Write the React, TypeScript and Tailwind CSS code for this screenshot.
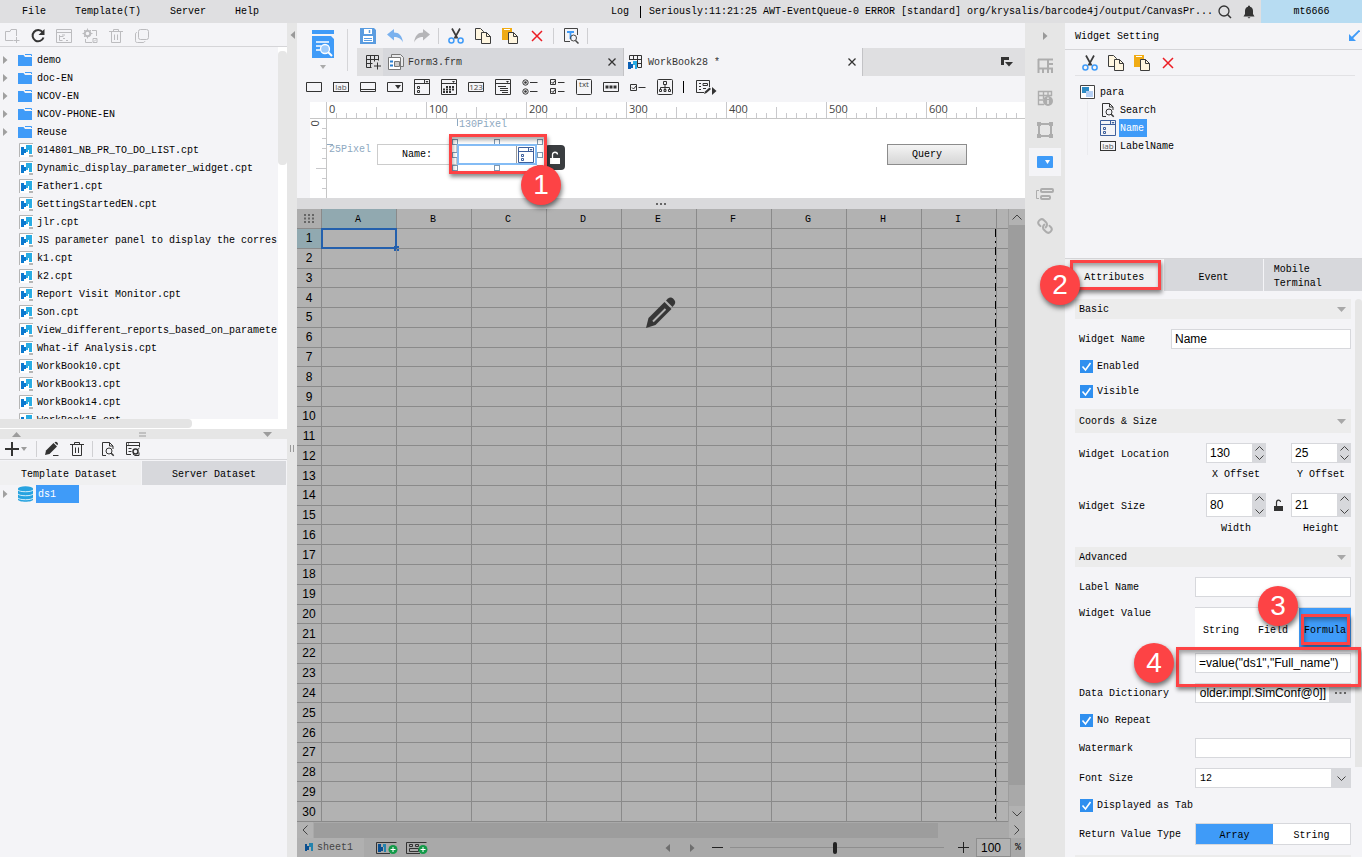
import { useState } from 'react';
import type { ReactNode } from 'react';
import { Link } from 'lucide-react';

interface SvgProps {
  w?: number;
  h?: number;
  className?: string;
  children: ReactNode;
}

function Svg({ w = 16, h = 16, className = '', children }: SvgProps) {
  return (
    <svg
      width={w}
      height={h}
      viewBox={`0 0 ${w} ${h}`}
      fill="none"
      stroke="currentColor"
      className={`shrink-0 ${className}`}
      aria-hidden="true"
    >
      {children}
    </svg>
  );
}

/* ---------- shared icons ---------- */

const CutIcon = () => (
  <Svg className="text-[#3c3c3c]">
    <path d="M4 .5l5.5 10M12 .5l-5.5 10" strokeWidth="1.7" />
    <circle cx="3.4" cy="12.5" r="2.5" stroke="#3f9bf8" strokeWidth="1.5" />
    <circle cx="12.6" cy="12.5" r="2.5" stroke="#3f9bf8" strokeWidth="1.5" />
  </Svg>
);

const CopyIcon = () => (
  <Svg className="text-[#3c3c3c]">
    <path d="M.5.5h5l3 3v8h-8z" fill="#fff6e0" />
    <path d="M6.5 4.5h5l4 4v7h-9z" fill="#fff6e0" />
    <path d="M11.5 4.5v4h4" />
  </Svg>
);

const PasteIcon = () => (
  <Svg className="text-[#3c3c3c]">
    <path d="M0 0h10v12H0z" fill="#f0ab14" stroke="none" />
    <path d="M2 1.5h6" stroke="#fff" />
    <path d="M6.5 4.5h5l4 4v7h-9z" fill="#fff6e0" />
    <path d="M11.5 4.5v4h4" />
  </Svg>
);

const DeleteIcon = () => (
  <Svg className="text-[#ec1c24]">
    <path d="M3 3l10 10M13 3L3 13" strokeWidth="1.5" />
  </Svg>
);

const TrashIcon = () => (
  <Svg>
    <path d="M1 3.5h14M5.5 3V1.5h5V3M3.5 4v10.5h9V4M6.5 6.5v5.5M9.5 6.5v5.5" />
  </Svg>
);

const PageSearchIcon = () => (
  <Svg className="text-[#333]">
    <path d="M6 14.5H2.5v-13h7L13 5v3M9.5 1.5V5H13" />
    <circle cx="9" cy="10" r="3" />
    <path d="M11.2 12.2l2.5 2.5" strokeWidth="1.5" />
  </Svg>
);

const ComboIcon = ({ color = '#333' }: { color?: string }) => (
  <Svg>
    <g stroke={color}>
      <path d="M.5.5h15v15H.5zM.5 4.5h15M10.5.5v4" />
      <path d="M3.500 7.500h2v2h-2zM3.500 11.500h2v2h-2z" />
      <path d="M11.500 2h3L13 4z" fill={color} stroke="none" />
    </g>
  </Svg>
);

const LabIcon = () => (
  <Svg h={11}>
    <rect x=".5" y=".5" width="15" height="9" stroke="#333" />
    <text x="8" y="8" textAnchor="middle" fontSize="8" fill="#555" stroke="none" fontFamily="Open Sans, sans-serif">lab</text>
  </Svg>
);

const Caret = ({ className = '' }: { className?: string }) => (
  <Svg w={5} h={8} className={className}>
    <path d="M0 0l4.500 4L0 8z" fill="currentColor" stroke="none" />
  </Svg>
);

const Down = ({ className = '' }: { className?: string }) => (
  <Svg w={9} h={5} className={className}>
    <path d="M0 0h9L4.500 5z" fill="currentColor" stroke="none" />
  </Svg>
);

const CptIcon = () => (
  <Svg w={14} h={14}>
    <path d="M.5 14V.5H14" stroke="#b5b5b5" />
    <path d="M1 1h13v13H1z" fill="#fff" stroke="none" />
    <path d="M2 4h3v2h2v4H5v2H2z" fill="#0a79d0" stroke="none" />
    <path d="M7 2h6v9h-3V7H9v2H7z" fill="#29ace3" stroke="none" />
    <path d="M10 13h4" stroke="#b5b5b5" strokeWidth="2" />
  </Svg>
);

const FolderIcon = () => (
  <Svg w={14} h={12}>
    <path d="M0 1h5.500l1.500 2h7v9H0z" fill="#3f9bf8" stroke="none" />
    <path d="M7 .5h6.500V2" stroke="#3f9bf8" />
  </Svg>
);

const Sep = ({ className = 'h-4' }: { className?: string }) => (
  <div className="flex w-[7px] shrink-0 justify-center">
    <div className={`w-px bg-[#cfcfd2] ${className}`} />
  </div>
);

/* ---------- annotation marks ---------- */

function Badge({ n, className }: { n: number; className: string }) {
  return (
    <div
      className={`absolute z-20 flex h-10 w-10 items-center justify-center rounded-full bg-[#fd4345] font-['Liberation_Sans',sans-serif] text-[28px] text-white shadow-[1px_3px_5px_rgba(0,0,0,0.55)] ${className}`}
    >
      {n}
    </div>
  );
}

function Frame({ className }: { className: string }) {
  return (
    <div
      className={`pointer-events-none absolute z-10 border-[3px] border-[#fd4345] shadow-[1px_3px_4px_rgba(0,0,0,0.45),inset_1px_3px_4px_rgba(0,0,0,0.35)] ${className}`}
    />
  );
}

/* ---------- header ---------- */

function MenuBar() {
  return (
    <header className="flex h-[23px] shrink-0 items-center bg-[#dfdfe1]">
      <nav className="flex gap-[29px] pl-[22px]">
        {['File', 'Template(T)', 'Server', 'Help'].map((m) => (
          <button key={m} type="button">{m}</button>
        ))}
      </nav>
      <div className="ml-auto flex h-full items-center">
        <span>Log</span>
        <span className="mx-2 ml-[11px] h-3 w-px bg-black" />
        <span className="whitespace-nowrap">
          Seriously:11:21:25 AWT-EventQueue-0 ERROR [standard] org/krysalis/barcode4j/output/CanvasPr...
        </span>
        <button type="button" aria-label="Search" className="ml-1 text-[#333]">
          <Svg>
            <circle cx="7" cy="7" r="5" strokeWidth="1.3" />
            <path d="M10.500 10.500L14 14" strokeWidth="1.5" />
          </Svg>
        </button>
        <button type="button" aria-label="Notifications" className="mr-1 ml-2 text-[#333]">
          <Svg>
            <path d="M8 1.500c1 0 1 .8 1 1.200 2 .5 3 2 3 4.300v3l1.500 2.500h-11L4 10V7c0-2.300 1-3.800 3-4.300 0-.4 0-1.200 1-1.200zM6.500 13.200h3L8 14.500z" fill="currentColor" stroke="none" />
          </Svg>
        </button>
        <button type="button" className="h-full w-[101px] bg-[#b7dcf2]">mt6666</button>
      </div>
    </header>
  );
}

/* ---------- left panel ---------- */

const FOLDERS = ['demo', 'doc-EN', 'NCOV-EN', 'NCOV-PHONE-EN', 'Reuse'];

const FILES = [
  '014801_NB_PR_TO_DO_LIST.cpt',
  'Dynamic_display_parameter_widget.cpt',
  'Father1.cpt',
  'GettingStartedEN.cpt',
  'jlr.cpt',
  'JS parameter panel to display the corres',
  'k1.cpt',
  'k2.cpt',
  'Report Visit Monitor.cpt',
  'Son.cpt',
  'View_different_reports_based_on_paramete',
  'What-if Analysis.cpt',
  'WorkBook10.cpt',
  'WorkBook13.cpt',
  'WorkBook14.cpt',
  'WorkBook15.cpt',
];

function FilePanel() {
  return (
    <section className="flex h-[406px] shrink-0 flex-col">
      <div className="flex h-6 shrink-0 items-center gap-[10px] border-b border-[#d5d5d8] pt-[3px] pl-1 text-[#bcbcbf]">
        <Svg>
          <path d="M9 12.500H1.500v-9H6l1-2h5.500V8M12.500 9v6M9.500 12.500h6" />
        </Svg>
        <Svg className="text-[#333]">
          <path d="M12.600 4.200A5.600 5.600 0 1 0 13.500 9.500" strokeWidth="2" />
          <path d="M14.500 1v6h-6z" fill="currentColor" stroke="none" />
        </Svg>
        <Svg>
          <path d="M.5 1.500h15v13H.5zM.5 4.500h15M3.500 7v5.500h3M3.500 8.500h4M6 7h3M7 10.500h2M10 12.500h2" />
        </Svg>
        <Svg>
          <circle cx="5.500" cy="5.500" r="2.800" strokeWidth="2" />
          <path d="M5.500.5v2M5.500 8.500v2M.5 5.500h2M8.500 5.500h2M2 2l1.500 1.500M9 2L7.500 3.500M2 9l1.500-1.500M10 2.500h4.500V8M3.500 11v3.500H10M11 10.500h4v4h-4zM12 13.500l2-2" />
        </Svg>
        <TrashIcon />
        <Svg>
          <rect x="4.500" y="1.500" width="10" height="10" rx="2" />
          <path d="M3 4.500c-1 0-1.500.5-1.500 1.500v6.500c0 1.500.5 2 2 2H9c1 0 1.500-.5 2-1.500" />
        </Svg>
      </div>
      <div className="flex min-h-0 flex-1">
        <ul className="min-w-0 flex-1 overflow-hidden pt-1">
          {FOLDERS.map((name) => (
            <li key={name} className="flex h-[18px] items-center whitespace-nowrap">
              <Caret className="mr-[10px] ml-[3px] text-[#a0a0a0]" />
              <FolderIcon />
              <span className="ml-[5px]">{name}</span>
            </li>
          ))}
          {FILES.map((name) => (
            <li key={name} className="flex h-[18px] items-center pl-[19px] whitespace-nowrap">
              <CptIcon />
              <span className="ml-1">{name}</span>
            </li>
          ))}
        </ul>
        <div className="ml-px w-[9px] shrink-0 bg-white pt-1">
          <div className="h-[114px] rounded bg-[#e6e6e6]" />
        </div>
      </div>
      <div className="h-[10px] shrink-0 bg-white">
        <div className="h-[9px] w-[192px] rounded-r bg-[#e4e4e4]" />
      </div>
    </section>
  );
}

function DatasetPanel() {
  return (
    <section className="flex-1">
      <div className="flex h-[10px] items-center justify-between bg-[#e6e6e6] pr-[15px] pl-3 text-[#9c9c9c]">
        <Down className="rotate-180" />
        <Svg w={7} h={5}>
          <path d="M0 1h7M0 4h7" />
        </Svg>
        <Down />
      </div>
      <div className="flex h-[21px] items-center border-b border-[#d5d5d8] text-[#333]">
        <Svg className="ml-1">
          <path d="M1 8h14M8 1v14" strokeWidth="2" />
        </Svg>
        <Svg w={6} h={4} className="ml-px text-[#9c9c9c]">
          <path d="M0 0h6L3 4z" fill="currentColor" stroke="none" />
        </Svg>
        <div className="mr-[7px] ml-[9px] h-4 w-px bg-[#d0d0d3]" />
        <Svg>
          <path d="M1 14l1-4.500L9.500 2l3.500 3.500L5.500 13z" fill="currentColor" stroke="none" />
          <path d="M10.500 1.500c1-1 2-.8 2.800 0s1 1.800 0 2.800z" fill="currentColor" stroke="none" />
          <path d="M9 14.500h5.500" />
        </Svg>
        <div className="ml-[9px]"><TrashIcon /></div>
        <div className="mr-[7px] ml-[7px] h-4 w-px bg-[#d0d0d3]" />
        <PageSearchIcon />
        <Svg className="ml-[9px]">
          <path d="M6 13.500H1.500v-12h13V6M1.500 4.500h13M3 3h1M3.500 7.500h3M3.500 10.500h3" />
          <circle cx="10.500" cy="10.500" r="2.500" strokeWidth="1.5" />
          <path d="M12 9l2.500-2M8 13l2 1.500h4v-3" />
        </Svg>
      </div>
      <div className="flex h-[25px] pt-px">
        <button type="button" className="w-[141px] bg-[#f0f0f1] pt-[3px] pr-[3px]">Template Dataset</button>
        <button type="button" className="ml-px w-[144px] bg-[#d7d8dc] pt-[3px]">Server Dataset</button>
      </div>
      <div className="flex h-[18px] items-center">
        <Caret className="mr-[10px] ml-[3px] text-[#a0a0a0]" />
        <Svg w={15}>
          <path d="M0 2.500v11c0 3 15 3 15 0v-11z" fill="#27a3e0" stroke="none" />
          <ellipse cx="7.500" cy="2.700" rx="7.500" ry="2.500" fill="#27a3e0" stroke="none" />
          <path d="M0 4c1 2.300 14 2.300 15 0M0 8c1 2.300 14 2.300 15 0M0 12c1 2.300 14 2.300 15 0" stroke="#d6effb" />
        </Svg>
        <span className="ml-[3px] flex h-full w-[43px] items-center bg-[#3f9bf8] pl-[2px] text-white">ds1</span>
      </div>
    </section>
  );
}

/* ---------- centre ---------- */

const Cell = ({ children, label }: { children: ReactNode; label: string }) => (
  <button type="button" aria-label={label} className="flex w-[27px] shrink-0 justify-center">
    {children}
  </button>
);

function MainToolbar() {
  return (
    <div className="flex h-[53px] shrink-0">
      <div className="relative flex w-[51px] shrink-0 flex-col items-center pt-[7px]">
        <Svg w={22} h={28}>
          <path d="M0 0h22v4H0zM0 6h19l3 3v19H0z" fill="#3f9bf8" stroke="none" />
          <path d="M4 12h13M4 16h5M4 20h4" stroke="#fff" strokeWidth="1.5" />
          <circle cx="13" cy="19" r="4.500" fill="#9dcbfb" stroke="#fff" strokeWidth="1.3" />
          <path d="M16 22l4 4" stroke="#fff" strokeWidth="2" />
        </Svg>
        <Svg w={6} h={4} className="mt-[7px] text-[#aaa]">
          <path d="M0 0h6L3 4z" fill="currentColor" stroke="none" />
        </Svg>
        <div className="absolute top-[6px] right-0 h-[42px] w-px bg-[#d5d5d8]" />
      </div>
      <div className="flex min-w-0 flex-1 flex-col">
        <div className="flex h-[25px] items-center pl-[6px]">
          <Cell label="Save">
            <Svg>
              <path d="M0 0h14l2 2v14H0z" fill="#5a9ce0" stroke="none" />
              <path d="M4 1h8v5H4z" fill="#fff" stroke="none" />
              <path d="M9.500 2v3" strokeWidth="1.5" stroke="#5a9ce0" />
              <path d="M3 8h10v6H3z" fill="#fff" stroke="none" />
              <path d="M4 10.500h8M4 12.500h8" stroke="#5a9ce0" />
            </Svg>
          </Cell>
          <Cell label="Undo">
            <Svg className="text-[#7ab1ee]">
              <path d="M0 6.500L7 1v3.500c5 0 8 3 9 10-2-4-5-5.500-9-5.500v3.500z" fill="currentColor" stroke="none" />
            </Svg>
          </Cell>
          <Cell label="Redo">
            <Svg className="text-[#b5b5b8]">
              <path d="M16 6.500L9 1v3.500c-5 0-8 3-9 10 2-4 5-5.500 9-5.500v3.500z" fill="currentColor" stroke="none" />
            </Svg>
          </Cell>
          <Sep />
          <Cell label="Cut"><CutIcon /></Cell>
          <Cell label="Copy"><CopyIcon /></Cell>
          <Cell label="Paste"><PasteIcon /></Cell>
          <Cell label="Delete"><DeleteIcon /></Cell>
          <Sep />
          <Cell label="Find">
            <Svg className="text-[#444]">
              <path d="M7 13.500H1.500v-13h13V7" />
              <path d="M4 4h7M7.500 4v7" stroke="#3f9bf8" strokeWidth="1.8" />
              <circle cx="10.500" cy="10" r="3" />
              <path d="M12.500 12.500L15.500 15.500" strokeWidth="1.5" />
            </Svg>
          </Cell>
          <Sep />
        </div>
        <div className="ml-[9px] flex h-7 items-center bg-[#dfdfe1] text-[#333]">
          <button type="button" aria-label="New template" className="flex h-full w-[26px] items-center justify-end bg-[#dfdfe1] pr-[2px]">
            <Svg>
              <path d="M1.500 1.500h12v5M1.500 1.500v12h5M1.500 5.500h12M1.500 9.500h6M5.500 1.500v12M9.500 1.500v6M12.500 8.500v7M9 12h7" />
            </Svg>
          </button>
          <div className="flex h-full w-[241px] items-center border-r border-[#c3c3c6] bg-[#d7d8dc] pr-[6px] pl-[5px]">
            <Svg className="text-[#777]">
              <path d="M3.500.5h9l3 3v9h-12z" fill="#e9e9ea" />
              <path d="M.5 3.500h12v12H.5z" fill="#fff" />
              <path d="M2 7.500h3M2 11.500h3" stroke="#2a7fd0" strokeWidth="2" />
              <path d="M6.500 7.500h5v5h-5z" fill="#ccc" />
            </Svg>
            <span className="ml-1">Form3.frm</span>
            <button type="button" aria-label="Close Form3.frm" className="ml-auto">
              <Svg w={10} h={10}><path d="M1.500 1.500l7 7M8.500 1.500l-7 7" strokeWidth="1.3" /></Svg>
            </button>
          </div>
          <div className="flex h-full w-[239px] items-center border-r border-[#c3c3c6] bg-[#f4f4f7] pr-[5px] pl-1">
            <Svg>
              <path d="M1.500 6V1.500h12v12H10M1.500 5.500h12M9 9.500h4.500M5.500 1.500v4M9.500 1.500v12" />
              <path d="M0 8h3v2h2v4H3v1H0z" fill="#0a5fb4" stroke="none" />
              <path d="M5 7h4v8H7v-4H5z" fill="#29ace3" stroke="none" />
            </Svg>
            <span className="ml-1">WorkBook28 *</span>
            <button type="button" aria-label="Close WorkBook28" className="ml-auto">
              <Svg w={10} h={10}><path d="M1.500 1.500l7 7M8.500 1.500l-7 7" strokeWidth="1.3" /></Svg>
            </button>
          </div>
          <button type="button" aria-label="Tab list" className="mr-[11px] ml-auto">
            <Svg w={13} h={10}>
              <path d="M0 0h8v3H3v5H0z" fill="currentColor" stroke="none" />
              <path d="M4 5h8L8 9.500z" fill="currentColor" stroke="none" />
            </Svg>
          </button>
        </div>
      </div>
    </div>
  );
}

function WidgetBar() {
  return (
    <div className="flex h-[26px] shrink-0 items-center pb-1 pl-[3px] text-[#333]">
      <Cell label="Text"><Svg><path d="M.5 3.500h15v9H.5z" /></Svg></Cell>
      <Cell label="Label widget"><LabIcon /></Cell>
      <Cell label="Button"><Svg><path d="M.5 3.500h15v9H.5zM.5 10.500h15" /></Svg></Cell>
      <Cell label="Drop-down box">
        <Svg>
          <path d="M.5 3.500h15v9H.5z" />
          <path d="M8 6h6l-3 4z" fill="currentColor" stroke="none" />
        </Svg>
      </Cell>
      <Cell label="Drop-down check box"><ComboIcon /></Cell>
      <Cell label="Date">
        <Svg>
          <path d="M.5.5h15v15H.5zM.5 4.500h15" />
          <path d="M5 8h9M2 10.500h12M2 13h9" strokeWidth="2" strokeDasharray="2 1" />
          <path d="M11 2h3l-1.500 2z" fill="currentColor" stroke="none" />
        </Svg>
      </Cell>
      <Cell label="Number">
        <Svg>
          <path d="M.5 3.500h15v9H.5z" />
          <text x="8" y="11" textAnchor="middle" fontSize="8" fill="#444" stroke="none" fontFamily="Open Sans, sans-serif">123</text>
        </Svg>
      </Cell>
      <Cell label="Tree">
        <Svg>
          <path d="M.5.5h15v15H.5zM.5 4.500h15M3 7.500h8M5 9.500h8M5 11.500h8M7 13.500h6" />
          <path d="M11 2h3l-1.500 2z" fill="currentColor" stroke="none" />
        </Svg>
      </Cell>
      <Cell label="Radio group">
        <Svg>
          <circle cx="3.500" cy="3.500" r="2.700" /><circle cx="3.500" cy="12.500" r="2.700" />
          <circle cx="3.500" cy="3.500" r="1.300" fill="currentColor" stroke="none" />
          <circle cx="3.500" cy="12.500" r="1.300" fill="currentColor" stroke="none" />
          <path d="M8 3.500h7.500M8 12.500h7.500" />
        </Svg>
      </Cell>
      <Cell label="Check box group">
        <Svg>
          <path d="M1.500.5h5v5h-5zM1.500 9.500h5v5h-5zM2.500 3l1.500 1.500 2-3M2.500 12l1.500 1.500 2-3M9 3.500h6.500M9 12.500h6.500" />
        </Svg>
      </Cell>
      <Cell label="Text area">
        <Svg>
          <rect x=".5" y=".5" width="15" height="15" rx="1" />
          <text x="8" y="8" textAnchor="middle" fontSize="8" fill="#444" stroke="none" fontFamily="Open Sans, sans-serif">txt</text>
        </Svg>
      </Cell>
      <Cell label="Password">
        <Svg>
          <path d="M.5 3.500h15v9H.5z" />
          <path d="M2.500 8h11" strokeWidth="3" strokeDasharray="3 1" />
        </Svg>
      </Cell>
      <Cell label="Check box">
        <Svg><path d="M.5 5.500h6v6h-6zM2 8.500l1.500 1.500 3-3.500M8.500 8.500h7" /></Svg>
      </Cell>
      <Cell label="View tree">
        <Svg>
          <rect x=".5" y=".5" width="15" height="15" rx="1" />
          <path d="M6.500 2.500h3v3h-3zM8 5.500v6M3.500 10.500v-2h9v2M2.500 10.500h2v2h-2zM7 10.500h2v2H7zM11.500 10.500h2v2h-2z" />
        </Svg>
      </Cell>
      <div className="mx-[5px] h-3 w-px bg-black" />
      <Cell label="Edit widgets">
        <Svg>
          <path d="M9 13.500H1.500v-12h13V8M4 4.500h2M4 7.500h2M4 10.500h2M8 4.500h4.500v2H8zM8 9.500h3" />
          <path d="M9 15l1-2.500 4.500-4 1.500 1.500-4.500 4z" fill="currentColor" stroke="none" />
        </Svg>
      </Cell>
      <Caret className="mt-2 -ml-1" />
    </div>
  );
}

const MAJORS = [0, 100, 200, 300, 400, 500, 600];
const MINORS = [0, 1, 2, 3, 4, 5, 6, 7, 8, 9];
const V_TICKS = [1, 2, 3, 4, 5, 6, 7];

const HANDLES = [
  'left-[-5px] top-[-5px]',
  'left-[37px] top-[-5px]',
  'left-[80px] top-[-5px]',
  'left-[-5px] top-2',
  'left-[80px] top-2',
  'left-[-5px] top-[21px]',
  'left-[37px] top-[21px]',
  'left-[80px] top-[21px]',
];

function ParamPane() {
  return (
    <div className="shrink-0 pl-[13px]">
      <div className="flex h-[17px] border-b border-[#c6c6c6] bg-white">
        <div className="w-4 shrink-0" />
        <div className="flex min-w-0 flex-1 overflow-hidden font-['Open_Sans',sans-serif] text-[11px] leading-3 text-[#444]">
          {MAJORS.map((m) => (
            <div key={m} className="relative flex h-4 w-[100px] shrink-0 items-end">
              {MINORS.map((i) => (
                <div
                  key={i}
                  className={`w-[10px] border-l border-[#c9c9cc] ${i === 0 ? 'h-4' : i === 5 ? 'h-[11px]' : 'h-[5px]'}`}
                />
              ))}
              <span className="absolute top-px left-[3px]">{m}</span>
            </div>
          ))}
        </div>
      </div>
      <div className="flex h-[79px] bg-white">
        <div className="flex w-4 shrink-0 flex-col items-end">
          <span className="flex h-[9px] w-full items-center pl-[2px] font-['Open_Sans',sans-serif] text-[11px] text-[#444]">
            <span className="-rotate-90">0</span>
          </span>
          {V_TICKS.map((i) => (
            <div key={i} className={`h-[10px] border-t border-[#c9c9cc] ${i === 5 ? 'w-[10px]' : 'w-1'}`} />
          ))}
        </div>
        {/* free-form widget canvas */}
        <div className="relative min-w-0 flex-1 border-l border-[#c6c6c6]">
          <span className="absolute top-0 left-[130px] h-[7px] w-px bg-[#8ea9c1]" />
          <span className="absolute top-0 left-[132px] leading-3 text-[#8ea9c1]">130Pixel</span>
          <span className="absolute top-[25px] left-0 h-px w-[6px] bg-[#8ea9c1]" />
          <span className="absolute top-[25px] left-[2px] leading-3 text-[#8ea9c1]">25Pixel</span>
          <label
            htmlFor="canvas-name"
            className="absolute top-[25px] left-[50px] flex h-[21px] w-20 items-center justify-center border border-[#ccc]"
          >
            Name:
          </label>
          <div className="absolute top-[25px] left-[130px] h-[21px] w-20">
            {HANDLES.map((pos) => (
              <span key={pos} className={`absolute h-[6px] w-[6px] border border-[#7f99b2] bg-white ${pos}`} />
            ))}
            <div className="relative flex h-full w-full border-2 border-[#84bcf5] bg-white">
              <input id="canvas-name" type="text" className="w-[58px] min-w-0 border-r border-[#999] outline-none" />
              <span className="flex flex-1 items-center justify-center"><ComboIcon color="#3d5f9c" /></span>
            </div>
          </div>
          <button
            type="button"
            aria-label="Unlock"
            className="absolute top-[26px] left-[218px] flex h-[25px] w-5 items-center justify-center rounded-sm bg-[#3a3d40] text-white"
          >
            <Svg w={12} h={14}>
              <path d="M1 7h10v6H1z" fill="currentColor" stroke="none" />
              <path d="M3.500 7V3.500C3.500.5 8.500.5 8.500 3.500" strokeWidth="1.3" />
            </Svg>
          </button>
          <button
            type="button"
            className="absolute top-[25px] left-[560px] h-[21px] w-20 border border-[#8c8c8c] bg-linear-to-b from-[#f4f4f4] to-[#d6d6d6]"
          >
            Query
          </button>
          <Frame className="top-[15px] left-[122px] h-10 w-[98px]" />
          <Badge n={1} className="top-[46px] left-[194px]" />
        </div>
      </div>
    </div>
  );
}

const COLS = ['A', 'B', 'C', 'D', 'E', 'F', 'G', 'H', 'I'];
const ROWS = Array.from({ length: 30 }, (_, i) => i + 1);

function Sheet() {
  return (
    <div className="relative flex min-h-0 flex-1">
      <table className="h-full min-w-0 flex-1 table-fixed border-separate border-spacing-0 bg-[#b2b2b2]">
        <thead>
          <tr className="h-5">
            <th className="w-[25px] border-r border-b border-[#8a8a8a] bg-[#adadad] p-0">
              <Svg w={10} h={9} className="mx-auto text-[#666]">
                <path d="M0 1h10M0 4.500h10M0 8h10" strokeWidth="2" strokeDasharray="2 2" />
              </Svg>
            </th>
            {COLS.map((c) => (
              <th
                key={c}
                className={`w-[75px] border-r border-b border-[#8a8a8a] px-0 pt-[3px] pr-[2px] pb-0 leading-4 font-normal ${
                  c === 'A' ? 'bg-[#91a9b0]' : ''
                }`}
              >
                {c}
              </th>
            ))}
            <th className="border-b border-[#8a8a8a] p-0" />
          </tr>
        </thead>
        <tbody>
          {ROWS.map((r) => (
            <tr key={r}>
              <th
                className={`border-r border-b border-[#8a8a8a] p-0 font-['Liberation_Sans',sans-serif] text-xs leading-3 font-normal ${
                  r === 1 ? 'bg-[#91a9b0]' : ''
                }`}
              >
                {r}
              </th>
              {COLS.map((c) => (
                <td key={c} className="relative border-r border-b border-[#8a8a8a] p-0">
                  {r === 1 && c === 'A' && (
                    <>
                      <div className="absolute -inset-px border-2 border-[#2460ad]" />
                      <div className="absolute -right-[3px] -bottom-[3px] h-[5px] w-[5px] bg-[#2460ad]" />
                    </>
                  )}
                </td>
              ))}
              <td className="border-b border-[#8a8a8a] p-0" />
            </tr>
          ))}
        </tbody>
      </table>
      {/* page break line */}
      <div className="absolute top-5 bottom-0 left-[698px] w-px bg-[repeating-linear-gradient(to_bottom,#000_0_8px,transparent_8px_12px,#000_12px_14px,transparent_14px_18px)]" />
      <Svg w={32} h={32} className="absolute top-[88px] left-[348px] text-[#363636]">
        <path d="M1 31l2.500-10L19.500 5l7 7-16 16z" fill="currentColor" stroke="none" />
        <path d="M21 3.500l2-2c2-1.500 4-1 5.500.5s2.500 3.500 1 5.500l-2 2.500z" fill="currentColor" stroke="none" />
        <path d="M8 24.500L20.500 12" stroke="#b2b2b2" strokeWidth="2" />
      </Svg>
      <div className="flex w-[17px] shrink-0 flex-col border-l border-[#9d9d9d] bg-[#a9a9a9] text-[#444]">
        <button type="button" aria-label="Scroll up" className="flex h-4 items-center justify-center bg-[#b2b2b2]">
          <Svg w={10} h={6}><path d="M.5 5.500L5 1l4.500 4.500" /></Svg>
        </button>
        <div className="h-[560px] bg-[#9d9d9d]" />
        <button type="button" aria-label="Scroll down" className="mt-auto flex h-4 items-center justify-center bg-[#b2b2b2]">
          <Svg w={10} h={6}><path d="M.5.5L5 5 9.500.5" /></Svg>
        </button>
      </div>
    </div>
  );
}

const AddSheetIcon = ({ grid }: { grid?: boolean }) => (
  <Svg w={22} h={14}>
    <path d="M14 12.500H.5v-11h20" stroke="#333" />
    {grid ? (
      <path d="M3.500 3.500h3v2h-3zM9.500 3.500h3v2h-3zM3.500 7.500h9v3h-9z" stroke="#333" />
    ) : (
      <>
        <path d="M2 3h3v3h2v4H5v1H2z" fill="#0a4f90" stroke="none" />
        <path d="M7 3h3v8H8V6H7z" fill="#2483ad" stroke="none" />
      </>
    )}
    <circle cx="17" cy="8.500" r="4.500" fill="#129a48" stroke="none" />
    <path d="M14.500 8.500h5M17 6v5" stroke="#fff" />
  </Svg>
);

function SheetFooter() {
  return (
    <footer className="shrink-0 bg-[#a9a9a9] text-[#444]">
      <div className="flex h-4 items-center">
        <button type="button" aria-label="Scroll left" className="flex h-full w-4 items-center justify-center bg-[#b2b2b2]">
          <Svg w={6} h={10}><path d="M5.500.5L1 5l4.500 4.500" /></Svg>
        </button>
        <div className="mr-[71px] ml-px h-[15px] flex-1 bg-[#9d9d9d]" />
        <button type="button" aria-label="Scroll right" className="flex h-full w-4 items-center justify-center bg-[#b2b2b2]">
          <Svg w={6} h={10}><path d="M.5.5L5 5 .5 9.500" /></Svg>
        </button>
      </div>
      <div className="flex h-[19px] items-center">
        <button type="button" className="flex h-full w-[67px] items-center bg-[#b0b0b0] pl-2">
          <Svg w={8} h={9}>
            <path d="M0 1h2v2h2v4H2v1H0z" fill="#0a4f90" stroke="none" />
            <path d="M4 0h4v8H6V4H4z" fill="#2483ad" stroke="none" />
          </Svg>
          <span className="ml-1">sheet1</span>
        </button>
        <button type="button" aria-label="Add sheet" className="ml-3"><AddSheetIcon /></button>
        <button type="button" aria-label="Add form sheet" className="ml-2"><AddSheetIcon grid /></button>
        <Caret className="ml-auto rotate-180 text-[#6e6e6e]" />
        <Caret className="ml-5 text-[#6e6e6e]" />
        <button type="button" aria-label="Zoom out" className="ml-[17px] text-[#222]">
          <Svg w={11} h={11}><path d="M0 5.500h11" /></Svg>
        </button>
        <input
          type="range"
          aria-label="Zoom"
          min={0}
          max={100}
          defaultValue={49}
          className="mx-[7px] h-3 w-[214px] appearance-none bg-[linear-gradient(#8e8e8e,#8e8e8e)] bg-[length:100%_1px] bg-center bg-no-repeat [&::-webkit-slider-thumb]:h-3 [&::-webkit-slider-thumb]:w-1 [&::-webkit-slider-thumb]:appearance-none [&::-webkit-slider-thumb]:rounded-sm [&::-webkit-slider-thumb]:bg-[#222]"
        />
        <button type="button" aria-label="Zoom in" className="ml-[7px] text-[#222]">
          <Svg w={11} h={11}><path d="M0 5.500h11M5.500 0v11" /></Svg>
        </button>
        <input
          type="text"
          aria-label="Zoom percent"
          defaultValue="100"
          className="ml-[7px] h-full w-[35px] border border-[#8e8e8e] bg-[#b2b2b2] pl-1 font-['Liberation_Sans',sans-serif] text-xs text-black outline-none"
        />
        <span className="w-[14px] text-center text-black">%</span>
      </div>
    </footer>
  );
}

/* ---------- right side ---------- */

function IconStrip() {
  const cell = 'flex h-7 w-8 items-center justify-center';
  return (
    <aside className="flex w-10 shrink-0 flex-col items-center gap-1 bg-[#e6e6e6] text-[#adadad]">
      <div className="flex h-[25px] items-center"><Caret className="text-[#999]" /></div>
      <button type="button" aria-label="Cell element" className={cell}>
        <Svg><path d="M1.500 1v14M1 1.500h15M1 10.500h15M11 1v14M11 6h5M6 11v4M15 11v4" strokeWidth="2" /></Svg>
      </button>
      <button type="button" aria-label="Cell attributes" className={cell}>
        <Svg>
          <path d="M7 14.500H1.500v-13h13V6M1 5.500h14M6.500 1.500V9M1.500 10h5M11 1.500v4" strokeWidth="1.4" />
          <circle cx="11" cy="11" r="5" fill="currentColor" stroke="none" />
          <path d="M11 7.500v1.500M11 10v4" stroke="#e6e6e6" strokeWidth="1.5" />
        </Svg>
      </button>
      <button type="button" aria-label="Floating element" className={cell}>
        <Svg>
          <path d="M2 2h12v12H2z" strokeWidth="2" />
          <path d="M0 0h4v4H0zM12 0h4v4h-4zM0 12h4v4H0zM12 12h4v4h-4z" fill="currentColor" stroke="none" />
        </Svg>
      </button>
      <button type="button" aria-label="Widget setting" className={`${cell} bg-[#f4f4f7]`}>
        <Svg>
          <rect y="2" width="16" height="12" rx="1" fill="#3f9bf8" stroke="none" />
          <path d="M8 6h5l-2.500 4z" fill="#fff" stroke="none" />
        </Svg>
      </button>
      <button type="button" aria-label="Condition attributes" className={cell}>
        <Svg w={18}>
          <rect x="5" y="3" width="12" height="3" rx="1" strokeWidth="2" />
          <rect x="5" y="10" width="9" height="3" rx="1" strokeWidth="2" />
          <path d="M3 4.500H.5v8H3" />
        </Svg>
      </button>
      <button type="button" aria-label="Hyperlink" className={cell}>
        <Link size={16} strokeWidth={3} className="rotate-90" />
      </button>
    </aside>
  );
}

function WidgetTree() {
  return (
    <div className="h-[182px] shrink-0 pt-[7px] pl-[15px]">
      <div className="flex h-[18px] items-center gap-[5px]">
        <Svg w={15} h={14}>
          <path d="M.5.5h14v13H.5z" fill="#fff" stroke="#444" />
          <path d="M2 2h7v6H2z" fill="#2e8bc4" stroke="none" />
          <path d="M6 6h7v6H6z" fill="#b5d0f5" stroke="none" />
        </Svg>
        para
      </div>
      <div className="ml-[7px] w-[140px] border-l border-[#ebebee] pl-3">
        <div className="flex h-[18px] items-center gap-1"><PageSearchIcon />Search</div>
        <div className="flex h-[18px] items-center gap-[3px]">
          <ComboIcon color="#3d5f9c" />
          <span className="flex h-full w-7 items-center bg-[#3f9bf8] pl-px text-white">Name</span>
        </div>
        <div className="flex h-[18px] items-center gap-1"><LabIcon />LabelName</div>
      </div>
    </div>
  );
}

function GroupHeader({ title, tall }: { title: string; tall?: boolean }) {
  return (
    <button type="button" className={`flex w-full items-center justify-between bg-[#ececec] pr-[5px] pl-1 ${tall ? 'h-6' : 'h-5'}`}>
      {title}
      <Down className="text-[#a8a8a8]" />
    </button>
  );
}

const FIELD = "h-5 min-w-0 border border-[#d7d8dc] bg-white px-[3px] font-['Liberation_Sans',sans-serif] text-xs outline-none";

function TextRow({ id, label, value = '', wide }: { id: string; label: string; value?: string; wide?: boolean }) {
  return (
    <div className="flex items-center pl-1">
      <label htmlFor={id} className={`shrink-0 ${wide ? 'w-[92px]' : 'w-[116px]'}`}>{label}</label>
      <input id={id} type="text" defaultValue={value} className={`${FIELD} flex-1`} />
    </div>
  );
}

function CheckRow({ label }: { label: string }) {
  return (
    <label className="flex h-[15px] w-fit items-center gap-1 pl-[5px]">
      <span className="grid">
        <input
          type="checkbox"
          defaultChecked
          className="peer col-start-1 row-start-1 h-[13px] w-[13px] appearance-none border border-[#bbb] bg-white checked:border-[#2f8fef] checked:bg-[#2f8fef]"
        />
        <Svg w={13} h={13} className="pointer-events-none invisible col-start-1 row-start-1 text-white peer-checked:visible">
          <path d="M2.500 6.500l3 3.500 5-7" strokeWidth="1.6" />
        </Svg>
      </span>
      {label}
    </label>
  );
}

function Spinner({ label, value, tall }: { label: string; value: string; tall?: boolean }) {
  return (
    <label className="flex w-[60px] flex-col items-center">
      <span className={`flex w-full ${tall ? 'h-6' : 'h-5'}`}>
        <input
          type="text"
          defaultValue={value}
          className="w-[47px] min-w-0 border border-[#d7d8dc] bg-white pl-[3px] font-['Liberation_Sans',sans-serif] text-xs outline-none"
        />
        <span className="flex w-[13px] flex-col items-center justify-between bg-[#d7d8dc] py-[3px] text-[#444]">
          <Svg w={9} h={5}><path d="M.5 4.500l4-4 4 4" /></Svg>
          <Svg w={9} h={5}><path d="M.5.5l4 4 4-4" /></Svg>
        </span>
      </span>
      <span className="mt-[6px] leading-3">{label}</span>
    </label>
  );
}

function AttributeForm() {
  const [mode, setMode] = useState('Formula');
  const [returnType, setReturnType] = useState('Array');

  return (
    <div className="flex min-h-0 flex-1 overflow-hidden pt-[10px] pl-[10px]">
      <div className="min-w-0 flex-1">
        <GroupHeader title="Basic" />
        <div className="flex flex-col gap-[10px] py-[10px]">
          <TextRow id="widget-name" label="Widget Name" value="Name" wide />
          <CheckRow label="Enabled" />
          <CheckRow label="Visible" />
        </div>
        <GroupHeader title="Coords & Size" tall />
        <div className="flex flex-col gap-3 pt-[10px] pb-3 pl-1">
          <div className="flex">
            <span className="w-[127px] leading-6">Widget Location</span>
            <Spinner label="X Offset" value="130" />
            <span className="flex-1" />
            <Spinner label="Y Offset" value="25" />
          </div>
          <div className="flex">
            <span className="w-[127px] leading-7">Widget Size</span>
            <Spinner label="Width" value="80" tall />
            <span className="flex h-6 flex-1 items-center justify-center text-[#333]">
              <Svg w={9} h={13}>
                <path d="M0 7h9v5H0z" fill="currentColor" stroke="none" />
                <path d="M2.500 7V3.500c0-3 4-3 4-.5" strokeWidth="1.2" />
              </Svg>
            </span>
            <Spinner label="Height" value="21" tall />
          </div>
        </div>
        <GroupHeader title="Advanced" />
        <div className="flex flex-col gap-[10px] py-[10px]">
          <TextRow id="label-name" label="Label Name" />
          <div className="relative flex pl-1">
            <span className="w-[116px] shrink-0 pt-px leading-3">Widget Value</span>
            <div className="min-w-0 flex-1">
              <div className="grid h-10 grid-cols-3 border-t border-[#d7d8dc] bg-white">
                {['String', 'Field', 'Formula'].map((m) => (
                  <button
                    key={m}
                    type="button"
                    onClick={() => setMode(m)}
                    className={`pt-[6px] ${mode === m ? 'bg-[#3f9bf8]' : ''}`}
                  >
                    {m}
                  </button>
                ))}
              </div>
              <input
                type="text"
                aria-label="Widget value formula"
                defaultValue={'=value("ds1","Full_name")'}
                className={`${FIELD} mt-[6px] w-full`}
              />
            </div>
            <Frame className="top-[7px] right-px h-[31px] w-[49px]" />
            <Badge n={3} className="-top-[21px] right-[53px]" />
            <Frame className="top-10 -right-[10px] h-10 w-[185px]" />
            <Badge n={4} className="top-9 right-[177px]" />
          </div>
          <div className="flex items-center pl-1">
            <label htmlFor="data-dict" className="w-[116px] shrink-0">Data Dictionary</label>
            <input id="data-dict" type="text" defaultValue="older.impl.SimConf@0]]" className={`${FIELD} flex-1 text-right`} />
            <button type="button" aria-label="Edit data dictionary" className="flex h-5 w-[21px] items-center justify-center bg-[#d7d8dc] text-[#666]">
              <Svg w={11} h={2}><path d="M0 1h11" strokeWidth="2" strokeDasharray="2 2.500" /></Svg>
            </button>
          </div>
          <CheckRow label="No Repeat" />
          <TextRow id="watermark" label="Watermark" />
          <div className="flex items-center pl-1">
            <label htmlFor="font-size" className="w-[116px] shrink-0">Font Size</label>
            <div className="relative h-5 flex-1">
              <select id="font-size" defaultValue="12" className="h-5 w-full appearance-none border border-[#d7d8dc] bg-white pl-1 outline-none">
                <option>12</option>
                <option>14</option>
              </select>
              <span className="pointer-events-none absolute inset-y-0 right-0 flex w-5 items-center justify-center bg-[#d7d8dc] text-[#444]">
                <Svg w={9} h={5}><path d="M.5.5l4 4 4-4" /></Svg>
              </span>
            </div>
          </div>
          <CheckRow label="Displayed as Tab" />
          <div className="flex items-center pl-1">
            <span className="w-[116px] shrink-0">Return Value Type</span>
            <div className="grid h-[22px] flex-1 grid-cols-2 border border-[#d7d8dc] bg-white">
              {['Array', 'String'].map((t) => (
                <button
                  key={t}
                  type="button"
                  onClick={() => setReturnType(t)}
                  className={`pt-[3px] ${returnType === t ? 'bg-[#3f9bf8]' : ''}`}
                >
                  {t}
                </button>
              ))}
            </div>
          </div>
        </div>
        <GroupHeader title="" />
      </div>
      <div className="ml-1 w-[7px] shrink-0">
        <div className="h-[468px] rounded-t bg-[#e6e6e6]" />
      </div>
    </div>
  );
}

function SettingsPanel() {
  return (
    <aside className="flex w-[297px] shrink-0 flex-col">
      <div className="flex h-[27px] shrink-0 items-center justify-between border-b border-[#d5d5d8] pl-[10px]">
        <h2>Widget Setting</h2>
        <button type="button" aria-label="Dock panel" className="pr-[2px] text-[#3f9bf8]">
          <Svg w={12} h={12}>
            <path d="M11.500.5L3 9" strokeWidth="1.8" />
            <path d="M1 4v7h7z" fill="currentColor" stroke="none" />
          </Svg>
        </button>
      </div>
      <div className="mr-[7px] ml-[10px] flex h-[26px] shrink-0 items-center gap-[10px] border-b border-[#e2e2e5] pl-[7px]">
        <button type="button" aria-label="Cut widget"><CutIcon /></button>
        <button type="button" aria-label="Copy widget"><CopyIcon /></button>
        <button type="button" aria-label="Paste widget"><PasteIcon /></button>
        <button type="button" aria-label="Delete widget"><DeleteIcon /></button>
      </div>
      <WidgetTree />
      <div className="relative grid h-[31px] shrink-0 grid-cols-3 gap-px border-t border-[#d5d5d8]">
        <button type="button" className="bg-[#f0f0f1] pt-1">Attributes</button>
        <button type="button" className="bg-[#d7d8dc] pt-1">Event</button>
        <button type="button" className="bg-[#d7d8dc] pt-1 pr-3 pl-[10px] text-left leading-[14px]">Mobile Terminal</button>
        <Frame className="top-px left-[5px] h-[30px] w-[91px]" />
        <Badge n={2} className="top-[6px] -left-[25px]" />
      </div>
      <AttributeForm />
    </aside>
  );
}

export default function App() {
  return (
    <div className="flex h-screen flex-col overflow-hidden bg-[#f4f4f7] font-['Liberation_Mono',monospace] text-[10px] text-black">
      <MenuBar />
      <div className="flex min-h-0 flex-1">
        <aside className="flex w-[287px] shrink-0 flex-col">
          <FilePanel />
          <DatasetPanel />
        </aside>
        <div className="flex w-[10px] shrink-0 flex-col items-center justify-between bg-[#e6e6e6] pt-2 text-[#999]">
          <Caret className="rotate-180" />
          <Svg w={4} h={7}><path d="M.5 0v7M3.500 0v7" /></Svg>
          <span />
        </div>
        <main className="flex min-w-0 flex-1 flex-col">
          <MainToolbar />
          <WidgetBar />
          <ParamPane />
          <div className="flex h-[11px] shrink-0 items-center justify-center bg-[#dadadc] text-[#666]">
            <Svg w={10} h={2}><path d="M0 1h10" strokeWidth="2" strokeDasharray="2 2" /></Svg>
          </div>
          <Sheet />
          <SheetFooter />
        </main>
        <IconStrip />
        <SettingsPanel />
      </div>
    </div>
  );
}
